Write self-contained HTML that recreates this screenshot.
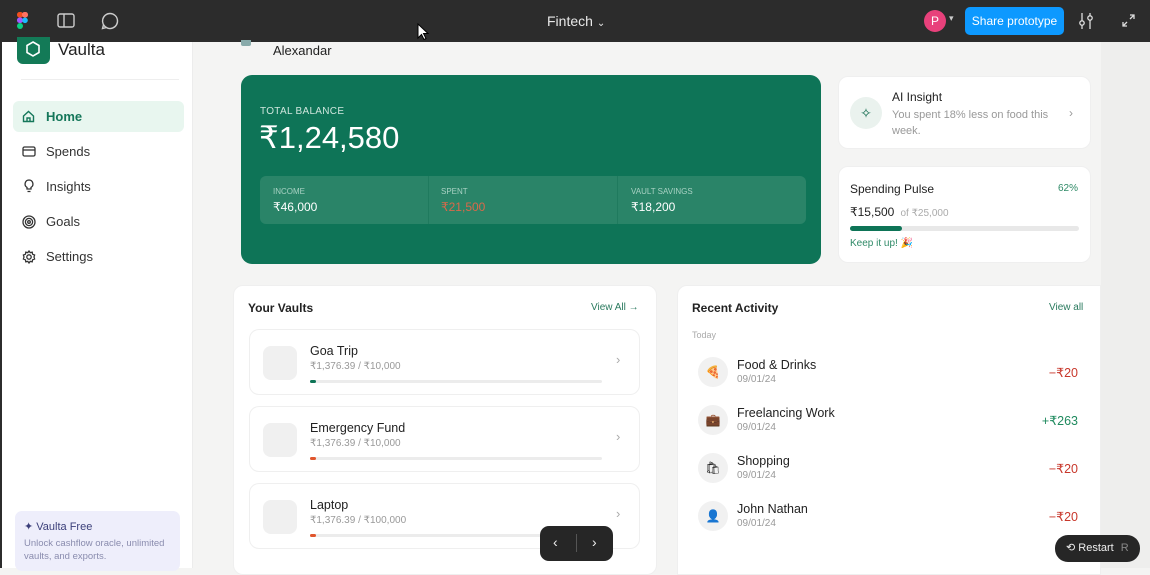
<!DOCTYPE html><html><head><meta charset="utf-8"><style>
*{box-sizing:border-box;margin:0;padding:0}
body{width:1150px;height:568px;overflow:hidden;font-family:"Liberation Sans",sans-serif;background:#f4f4f3;position:relative;color:#222}
.a{position:absolute}
.top{left:0;top:0;width:1150px;height:42px;background:#2c2c2c}
.side{left:0;top:42px;width:193px;height:526px;background:#fff;border-left:2px solid #2c2c2c;border-right:1px solid #ececec}
.nav{left:11px;width:171px;height:31px;border-radius:6px;font-size:13px;color:#333;display:flex;align-items:center;padding-left:33px}
.card{background:#fff;border:1px solid #efefef;border-radius:10px}
.vc{left:249px;width:391px;height:66px}
.vc .ic{position:absolute;left:13px;top:16px;width:34px;height:34px;border-radius:8px;background:#f0f0f0}
.vc .t{position:absolute;left:60px;top:14px;font-size:12.5px;color:#222}
.vc .s{position:absolute;left:60px;top:31px;font-size:10px;color:#999}
.vc .bar{position:absolute;left:60px;top:50px;width:292px;height:3px;background:#ececec;border-radius:2px}
.vc .bar i{position:absolute;left:0;top:0;width:6px;height:3px;border-radius:2px}
.vc .ch{position:absolute;left:366px;top:22px;color:#aaa;font-size:13px}
.ar{left:698px;width:385px;height:36px}
.ar .c{position:absolute;left:0;top:3px;width:30px;height:30px;border-radius:50%;background:#f1f1f1;font-size:12px;text-align:center;line-height:30px}
.ar .t{position:absolute;left:39px;top:4px;font-size:12.5px}
.ar .d{position:absolute;left:39px;top:20px;font-size:10px;color:#999}
.ar .v{position:absolute;right:5px;top:11px;font-size:12.5px}
</style></head><body>
<div class="a top">
<svg class="a" style="left:17px;top:12px" width="11" height="17" viewBox="0 0 11 17"><rect x="0" y="0" width="6" height="5.5" rx="2.5" fill="#f24e1e"/><rect x="5" y="0" width="6" height="5.5" rx="2.5" fill="#ff7262"/><rect x="0" y="5.5" width="6" height="5.5" rx="2.5" fill="#a259ff"/><circle cx="8" cy="8.3" r="2.8" fill="#1abcfe"/><rect x="0" y="11" width="6" height="6" rx="3" fill="#0acf83"/></svg>
<svg class="a" style="left:57px;top:13px" width="18" height="15" viewBox="0 0 18 15" fill="none" stroke="#ccc" stroke-width="1.4"><rect x="1" y="1" width="16" height="13" rx="2"/><line x1="7" y1="1" x2="7" y2="14"/></svg>
<svg class="a" style="left:101px;top:12px" width="18" height="18" viewBox="0 0 18 18" fill="none" stroke="#ccc" stroke-width="1.4"><path d="M9 1.5a7.5 7.5 0 1 1-6.5 11.2L1.5 16.5l3.8-1A7.5 7.5 0 0 1 9 1.5z"/></svg>
<div class="a" style="left:547px;top:13px;color:#e8e8e8;font-size:14px">Fintech <span style="font-size:10px">&#8964;</span></div>
<svg class="a" style="left:417px;top:23px" width="12" height="18" viewBox="0 0 12 18"><path d="M1 1v14l3.5-3.5 2.5 5 2-1-2.5-5H11z" fill="#fff" stroke="#000"/></svg>
<div class="a" style="left:924px;top:10px;width:22px;height:22px;border-radius:50%;background:#e8417b;color:#fff;font-size:12px;text-align:center;line-height:22px">P</div>
<div class="a" style="left:949px;top:13px;color:#ccc;font-size:9px">&#9662;</div>
<div class="a" style="left:965px;top:7px;width:99px;height:28px;border-radius:5px;background:#0d99ff;color:#fff;font-size:12px;text-align:center;line-height:28px">Share prototype</div>
<svg class="a" style="left:1078px;top:12px" width="16" height="18" viewBox="0 0 16 18" fill="none" stroke="#ddd" stroke-width="1.3"><line x1="4" y1="1" x2="4" y2="17"/><line x1="12" y1="1" x2="12" y2="17"/><circle cx="4" cy="11" r="2.2" fill="#2c2c2c"/><circle cx="12" cy="6" r="2.2" fill="#2c2c2c"/></svg>
<svg class="a" style="left:1122px;top:14px" width="13" height="13" viewBox="0 0 13 13" fill="none" stroke="#ddd" stroke-width="1.3"><path d="M8 1h4v4M12 1L8 5M5 12H1V8M1 12l4-4"/></svg>
</div>
<div class="a side">
<div class="a" style="left:15px;top:-5px;width:33px;height:27px;background:#137a57;border-radius:0 0 6px 6px"></div>
<svg class="a" style="left:24px;top:-1px" width="14" height="16" viewBox="0 0 14 16" fill="none" stroke="#fff" stroke-width="1.6"><path d="M7 1l6 3.5v7L7 15l-6-3.5v-7z"/></svg>
<div class="a" style="left:56px;top:-2px;font-size:17px;color:#222">Vaulta</div>
<div class="a" style="left:19px;top:37px;width:158px;height:1px;background:#eee"></div>
<div class="a nav" style="top:59px;background:#e8f6ef;color:#15775a;font-weight:bold">Home</div>
<div class="a nav" style="top:94px">Spends</div>
<div class="a nav" style="top:129px">Insights</div>
<div class="a nav" style="top:164px">Goals</div>
<div class="a nav" style="top:199px">Settings</div>
<svg class="a" style="left:20px;top:68px" width="13" height="13" viewBox="0 0 13 13" fill="none" stroke="#15775a" stroke-width="1.4"><path d="M1.5 6L6.5 1.5 11.5 6v5.5h-10z M5 11.5V8h3v3.5"/></svg>
<svg class="a" style="left:20px;top:104px" width="14" height="11" viewBox="0 0 14 11" fill="none" stroke="#333" stroke-width="1.3"><rect x="1" y="1" width="12" height="9" rx="1.5"/><line x1="1" y1="4" x2="13" y2="4"/></svg>
<svg class="a" style="left:22px;top:137px" width="10" height="14" viewBox="0 0 10 14" fill="none" stroke="#333" stroke-width="1.3"><path d="M5 1a4 4 0 0 0-2 7.4V10h4V8.4A4 4 0 0 0 5 1zM3.5 12.5h3"/></svg>
<svg class="a" style="left:20px;top:173px" width="14" height="14" viewBox="0 0 14 14" fill="none" stroke="#333" stroke-width="1.3"><circle cx="7" cy="7" r="6"/><circle cx="7" cy="7" r="3.6"/><circle cx="7" cy="7" r="1.3"/></svg>
<svg class="a" style="left:20px;top:208px" width="14" height="14" viewBox="0 0 14 14" fill="none" stroke="#333" stroke-width="1.3"><circle cx="7" cy="7" r="2.2"/><path d="M7 1l1.2 1.6 2-.4.4 2L12.6 5 12 7l.6 2-2 .8-.4 2-2-.4L7 13l-1.2-1.6-2 .4-.4-2L1.4 9 2 7l-.6-2 2-.8.4-2 2 .4z"/></svg>
<div class="a" style="left:13px;top:469px;width:165px;height:60px;background:#eeeefb;border-radius:7px"></div>
<div class="a" style="left:22px;top:478px;font-size:11px;color:#3b3f7a">&#10022; Vaulta Free</div>
<div class="a" style="left:22px;top:495px;font-size:9.5px;color:#8a8cae;line-height:13px;width:150px">Unlock cashflow oracle, unlimited vaults, and exports.</div>
</div>
<div class="a" style="left:241px;top:40px;width:10px;height:6px;background:#8aa;border-radius:0 0 2px 2px"></div>
<div class="a" style="left:273px;top:43px;font-size:13px;color:#222">Alexandar</div>
<div class="a" style="left:241px;top:75px;width:580px;height:189px;background:#0e7457;border-radius:11px">
<div class="a" style="left:19px;top:31px;font-size:10px;color:#cfe6dd;letter-spacing:.3px">TOTAL BALANCE</div>
<div class="a" style="left:18px;top:45px;font-size:31px;color:#fff">₹1,24,580</div>
<div class="a" style="left:19px;top:101px;width:546px;height:48px;background:#2a8468;border-radius:6px">
<div class="a" style="left:168px;top:0;width:1px;height:48px;background:#1f7a5e"></div>
<div class="a" style="left:357px;top:0;width:1px;height:48px;background:#1f7a5e"></div>
<div class="a" style="left:13px;top:11px;font-size:8px;color:#a9d2c4">INCOME</div>
<div class="a" style="left:13px;top:24px;font-size:12px;color:#fff">₹46,000</div>
<div class="a" style="left:181px;top:11px;font-size:8px;color:#a9d2c4">SPENT</div>
<div class="a" style="left:181px;top:24px;font-size:12px;color:#d9694a">₹21,500</div>
<div class="a" style="left:371px;top:11px;font-size:8px;color:#a9d2c4">VAULT SAVINGS</div>
<div class="a" style="left:371px;top:24px;font-size:12px;color:#fff">₹18,200</div>
</div></div>
<div class="a card" style="left:838px;top:76px;width:253px;height:73px">
<div class="a" style="left:11px;top:20px;width:32px;height:32px;border-radius:50%;background:#eaf2ee;color:#136c50;text-align:center;line-height:32px;font-size:14px">&#10023;</div>
<div class="a" style="left:53px;top:13px;font-size:12px;color:#222">AI Insight</div>
<div class="a" style="left:53px;top:30px;font-size:11px;color:#999;line-height:16px;width:165px">You spent 18% less on food this week.</div>
<div class="a" style="left:230px;top:29px;color:#999;font-size:12px">›</div>
</div>
<div class="a card" style="left:838px;top:166px;width:253px;height:97px">
<div class="a" style="left:11px;top:15px;font-size:12px">Spending Pulse</div>
<div class="a" style="right:12px;top:16px;font-size:10px;color:#2f8a67">62%</div>
<div class="a" style="left:11px;top:38px;font-size:12px">₹15,500 <span style="font-size:10px;color:#aaa">&nbsp;of ₹25,000</span></div>
<div class="a" style="left:11px;top:59px;width:229px;height:5px;border-radius:3px;background:#e8e8e8"><div style="width:52px;height:5px;border-radius:3px;background:#0e7457"></div></div>
<div class="a" style="left:11px;top:71px;font-size:10px;color:#2f8a67">Keep it up! 🎉</div>
</div>
<div class="a card" style="left:233px;top:285px;width:424px;height:290px"></div>
<div class="a" style="left:248px;top:301px;font-size:12px;font-weight:bold;color:#222">Your Vaults</div>
<div class="a" style="left:591px;top:302px;font-size:10px;color:#2a7a5e">View All →</div>
<div class="a card vc" style="top:329px"><div class="ic"></div><div class="t">Goa Trip</div><div class="s">₹1,376.39 / ₹10,000</div><div class="bar"><i style="background:#0e7457"></i></div><div class="ch">›</div></div>
<div class="a card vc" style="top:406px"><div class="ic"></div><div class="t">Emergency Fund</div><div class="s">₹1,376.39 / ₹10,000</div><div class="bar"><i style="background:#e0552d"></i></div><div class="ch">›</div></div>
<div class="a card vc" style="top:483px"><div class="ic"></div><div class="t">Laptop</div><div class="s">₹1,376.39 / ₹100,000</div><div class="bar"><i style="background:#e0552d"></i></div><div class="ch">›</div></div>
<div class="a card" style="left:677px;top:285px;width:424px;height:290px;border-radius:10px 0 0 0"></div>
<div class="a" style="left:1101px;top:42px;width:49px;height:526px;background:#eeeeed"></div>
<div class="a" style="left:692px;top:301px;font-size:12px;font-weight:bold">Recent Activity</div>
<div class="a" style="left:1049px;top:302px;font-size:10px;color:#2a7a5e">View all</div>
<div class="a" style="left:692px;top:330px;font-size:9px;color:#aaa">Today</div>
<div class="a ar" style="top:354px"><div class="c">🍕</div><div class="t">Food &amp; Drinks</div><div class="d">09/01/24</div><div class="v" style="color:#c8372b">−₹20</div></div>
<div class="a ar" style="top:402px"><div class="c">💼</div><div class="t">Freelancing Work</div><div class="d">09/01/24</div><div class="v" style="color:#1f8a5e">+₹263</div></div>
<div class="a ar" style="top:450px"><div class="c">🛍</div><div class="t">Shopping</div><div class="d">09/01/24</div><div class="v" style="color:#c8372b">−₹20</div></div>
<div class="a ar" style="top:498px"><div class="c">👤</div><div class="t">John Nathan</div><div class="d">09/01/24</div><div class="v" style="color:#c8372b">−₹20</div></div>
<div class="a" style="left:540px;top:526px;width:73px;height:35px;border-radius:9px;background:#262626;color:#eee;font-size:14px">
<div class="a" style="left:13px;top:8px">‹</div><div class="a" style="left:36px;top:8px;width:1px;height:18px;background:#555"></div><div class="a" style="left:52px;top:8px">›</div></div>
<div class="a" style="left:1055px;top:535px;width:85px;height:27px;border-radius:13px;background:#262626;color:#eee;font-size:11px;line-height:27px;padding-left:11px">⟲ Restart <span style="color:#888;margin-left:4px">R</span></div>
</body></html>
